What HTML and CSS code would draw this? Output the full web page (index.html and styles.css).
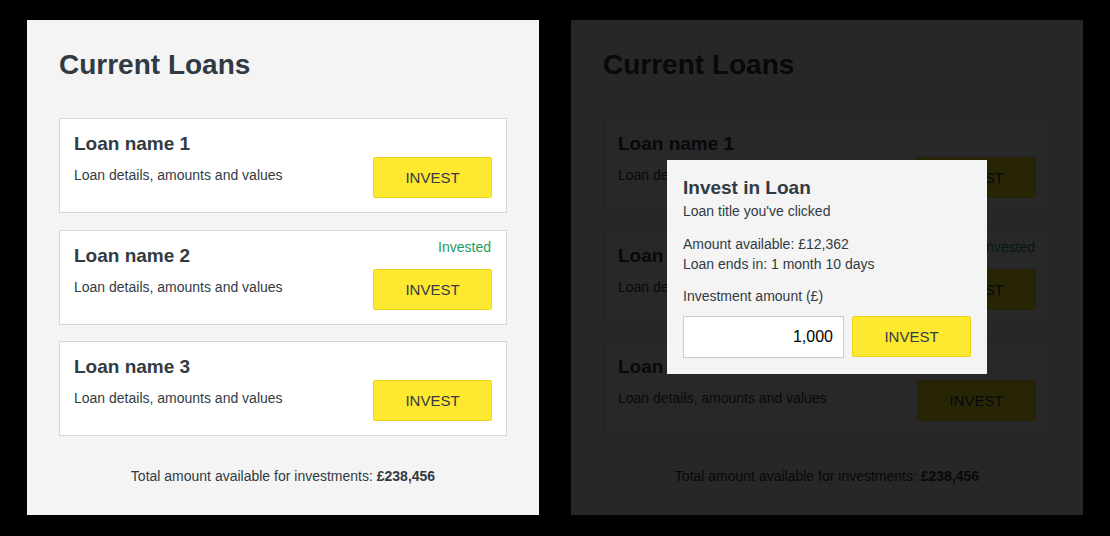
FILE: index.html
```html
<!DOCTYPE html>
<html lang="en">
<head>
<meta charset="utf-8">
<title>Current Loans</title>
<link rel="stylesheet" href="styles.css">
</head>
<body>
<div class="stage">
  <section class="panel">
    <h1 class="page-title">Current Loans</h1>
    <div class="loans">
      <div class="loan">
        <div class="loan-info">
          <h2 class="loan-name">Loan name 1</h2>
          <p class="loan-details">Loan details, amounts and values</p>
        </div>
        <div class="loan-actions">
          <div class="loan-status"></div>
          <button class="btn">INVEST</button>
        </div>
      </div>
      <div class="loan">
        <div class="loan-info">
          <h2 class="loan-name">Loan name 2</h2>
          <p class="loan-details">Loan details, amounts and values</p>
        </div>
        <div class="loan-actions">
          <div class="loan-status">Invested</div>
          <button class="btn">INVEST</button>
        </div>
      </div>
      <div class="loan">
        <div class="loan-info">
          <h2 class="loan-name">Loan name 3</h2>
          <p class="loan-details">Loan details, amounts and values</p>
        </div>
        <div class="loan-actions">
          <div class="loan-status"></div>
          <button class="btn">INVEST</button>
        </div>
      </div>
    </div>
    <p class="total">Total amount available for investments: <strong>£238,456</strong></p>
  </section>

  <section class="panel">
    <h1 class="page-title">Current Loans</h1>
    <div class="loans">
      <div class="loan">
        <div class="loan-info">
          <h2 class="loan-name">Loan name 1</h2>
          <p class="loan-details">Loan details, amounts and values</p>
        </div>
        <div class="loan-actions">
          <div class="loan-status"></div>
          <button class="btn">INVEST</button>
        </div>
      </div>
      <div class="loan">
        <div class="loan-info">
          <h2 class="loan-name">Loan name 2</h2>
          <p class="loan-details">Loan details, amounts and values</p>
        </div>
        <div class="loan-actions">
          <div class="loan-status">Invested</div>
          <button class="btn">INVEST</button>
        </div>
      </div>
      <div class="loan">
        <div class="loan-info">
          <h2 class="loan-name">Loan name 3</h2>
          <p class="loan-details">Loan details, amounts and values</p>
        </div>
        <div class="loan-actions">
          <div class="loan-status"></div>
          <button class="btn">INVEST</button>
        </div>
      </div>
    </div>
    <p class="total">Total amount available for investments: <strong>£238,456</strong></p>

    <div class="overlay">
      <div class="modal">
        <h2 class="modal-title">Invest in Loan</h2>
        <p class="modal-sub">Loan title you've clicked</p>
        <p class="modal-info">Amount available: £12,362<br>Loan ends in: 1 month 10 days</p>
        <label class="modal-label" for="amount">Investment amount (£)</label>
        <div class="modal-row">
          <input id="amount" class="amount-input" type="text" value="1,000">
          <button class="btn">INVEST</button>
        </div>
      </div>
    </div>
  </section>
</div>
</body>
</html>
```

FILE: styles.css
```css
* { box-sizing: border-box; }

html, body {
  margin: 0;
  background: #000;
}

body {
  font-family: "Liberation Sans", Arial, Helvetica, sans-serif;
  color: #323b44;
}

.stage {
  display: flex;
  gap: 32px;
  padding: 20px 27px 21px;
}

.panel {
  position: relative;
  width: 512px;
  height: 495px;
  background: #f4f4f4;
  padding: 29px 32px 0;
  overflow: hidden;
}

.page-title {
  margin: 0 0 37px;
  font-size: 28px;
  line-height: 32px;
  font-weight: bold;
  color: #313a43;
}

.loans {
  display: flex;
  flex-direction: column;
  gap: 16.5px;
}

.loan {
  display: flex;
  justify-content: space-between;
  background: #fff;
  border: 1px solid #d6d6d6;
  padding: 10px 14px 14px;
}

.loan-info {
  padding-top: 3px;
}

.loan-name {
  margin: 0;
  font-size: 19px;
  line-height: 24px;
  font-weight: bold;
}

.loan-details {
  margin: 9px 0 0;
  font-size: 14px;
  line-height: 20px;
}

.loan-actions {
  display: flex;
  flex-direction: column;
  align-items: flex-end;
}

.loan-status {
  height: 16px;
  font-size: 14px;
  line-height: 13px;
  color: #1f9b62;
  padding-right: 1px;
}

.loan-actions .btn {
  margin-top: 12px;
}

.btn {
  width: 119px;
  height: 41px;
  background: #ffe830;
  border: 1px solid #ecd41f;
  border-radius: 2px;
  font-family: inherit;
  font-size: 15px;
  color: #333b44;
  padding: 0;
  cursor: pointer;
}

.total {
  margin: 30px 0 0;
  text-align: center;
  font-size: 14px;
  line-height: 20px;
}

.total strong { font-weight: bold; }

.overlay {
  position: absolute;
  inset: 0;
  background: rgba(0, 0, 0, 0.845);
  display: flex;
  align-items: center;
  justify-content: center;
  padding-bottom: 1px;
}

.modal {
  width: 320px;
  background: #f4f4f4;
  padding: 16px;
  color: #323b44;
}

.modal-title {
  margin: 0 0 2px;
  font-size: 19px;
  line-height: 23px;
  font-weight: bold;
}

.modal-sub {
  margin: 0;
  font-size: 14px;
  line-height: 20px;
}

.modal-info {
  margin: 13px 0 0;
  font-size: 14px;
  line-height: 20px;
}

.modal-label {
  display: block;
  margin-top: 12px;
  font-size: 14px;
  line-height: 20px;
}

.modal-row {
  display: flex;
  gap: 8px;
  margin-top: 10px;
}

.amount-input {
  width: 161px;
  height: 42px;
  border: 1px solid #cccccc;
  background: #fff;
  font-family: inherit;
  font-size: 16px;
  color: #000;
  text-align: right;
  padding: 0 10px;
  outline: none;
}
```
